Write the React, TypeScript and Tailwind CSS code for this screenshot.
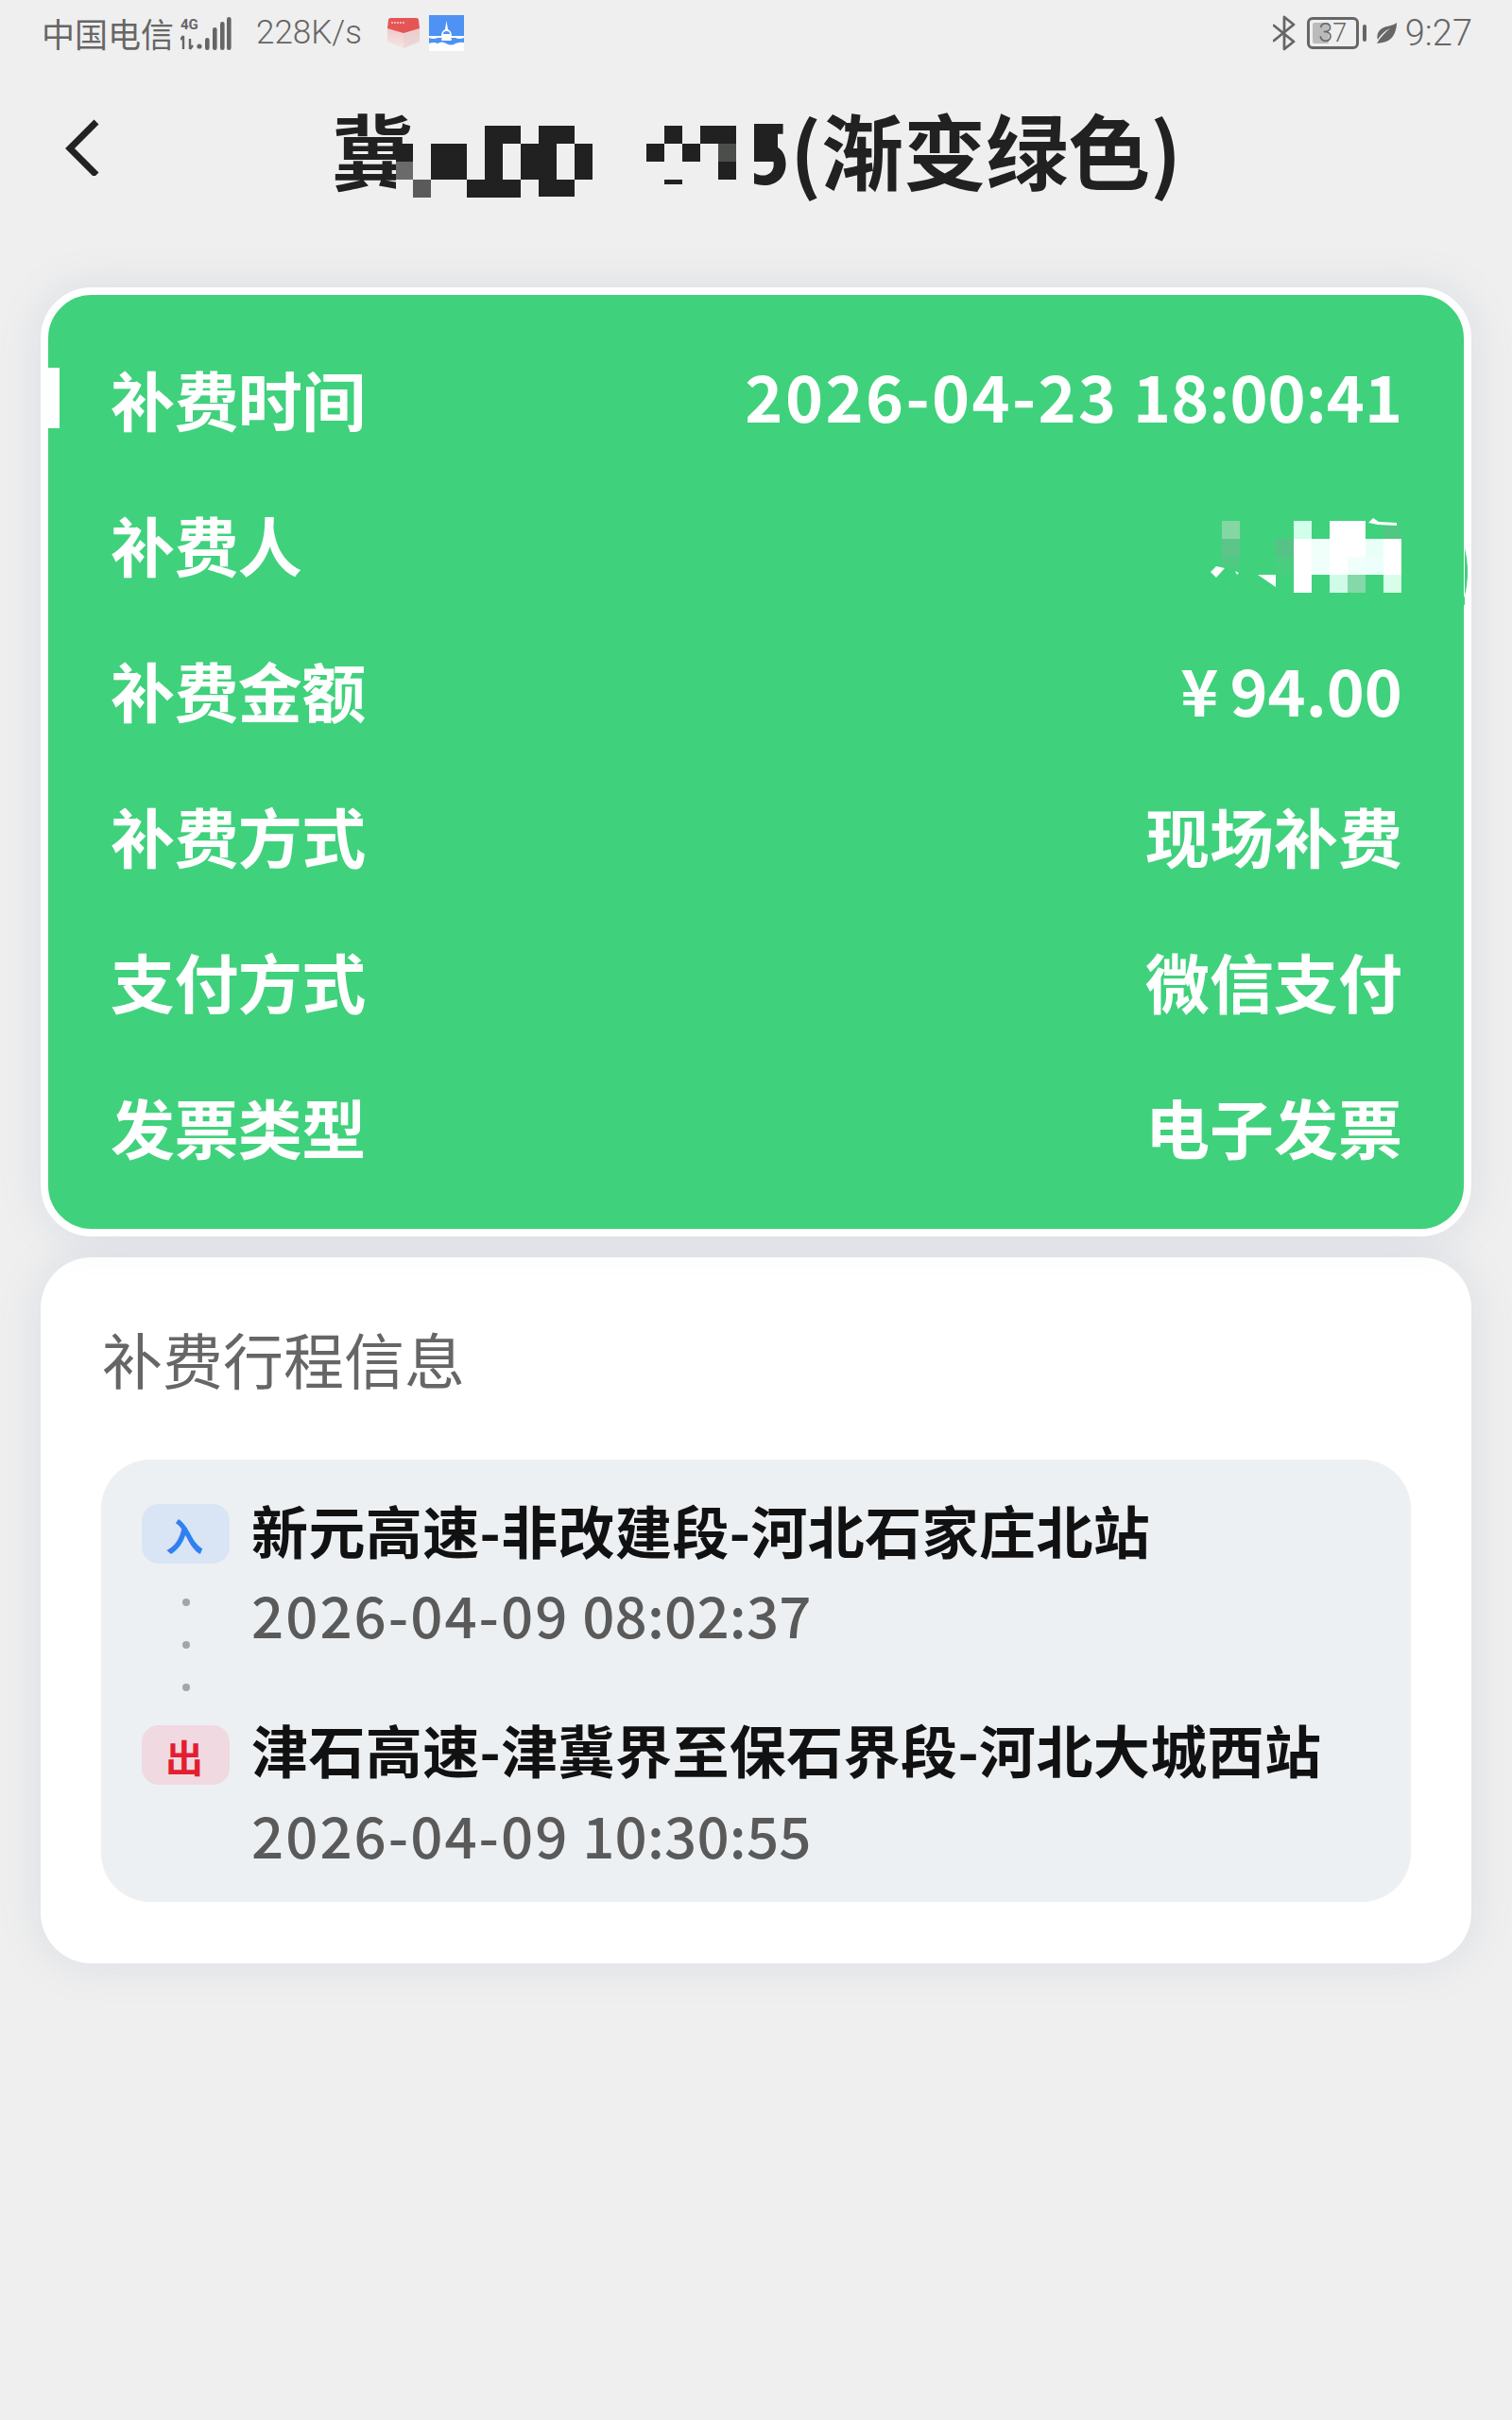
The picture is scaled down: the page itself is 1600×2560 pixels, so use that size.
import React from "react";

const CJK = "font-['Noto_Sans_CJK_SC','Noto_Sans',sans-serif]";

function SignalIcon() {
  return (
    <svg width="54" height="36" viewBox="0 0 54 36" className="ml-[7px]">
      <text x="0" y="14" fontSize="15" fontWeight="700" fill="#666" fontFamily="Roboto, sans-serif">4G</text>
      <path d="M3 21v14M0 25l3-4M10 24v11M10 35l3-4" stroke="#666" strokeWidth="2.4" fill="none" />
      <circle cx="20" cy="32" r="2.6" fill="#666" />
      <rect x="26" y="23" width="4.6" height="13" rx="2.3" fill="#666" />
      <rect x="34" y="12" width="4.6" height="24" rx="2.3" fill="#666" />
      <rect x="42" y="6" width="4.6" height="30" rx="2.3" fill="#666" />
      <rect x="49" y="1" width="4.6" height="35" rx="2.3" fill="#666" />
    </svg>
  );
}

function RedBox() {
  return (
    <svg width="36" height="34" viewBox="0 0 36 34">
      <defs>
        <linearGradient id="boxl" x1="0" y1="0" x2="0" y2="1">
          <stop offset="0" stopColor="#f0c4c4" />
          <stop offset="1" stopColor="#f5e6e6" />
        </linearGradient>
      </defs>
      <path d="M1 9 18 15 35 9V26L18 33 1 26Z" fill="url(#boxl)" />
      <path d="M18 15V33L35 26V9Z" fill="#e8cfcf" opacity="0.6" />
      <path d="M2 3Q2 1 5 1H31Q34 1 34 3L35 12 18 17 1 12Z" fill="#e45555" />
      <path d="M5 6H19" stroke="#f8d0d0" strokeWidth="1.5" strokeDasharray="2 1" />
    </svg>
  );
}

function PlaneIcon() {
  return (
    <svg width="37" height="38" viewBox="0 0 37 38">
      <rect width="37" height="38" fill="#4e93f3" />
      <path d="M18.5 6 17 15Q13 17 13 22L0 22V24Q5 26 9 24H28Q32 26 37 24V22L24 22Q24 17 20 15Z" fill="#fff" />
      <path d="M15 20Q15 17 18.5 17 22 17 22 20Z" fill="#4e93f3" />
      <path d="M0 30Q5 28 9 30 14 27 18 30 24 33 28 30 33 28 37 29V38H0Z" fill="#fff" />
      <rect x="13" y="24" width="11" height="3" rx="1.5" fill="#fff" />
    </svg>
  );
}

function StatusBar() {
  return (
    <div className="flex h-[75px] items-start justify-between pl-[44px] pr-[42px] pt-[16px] text-[#666]">
      <div className="flex items-center">
        <span className={`${CJK} text-[35px] leading-[36px]`}>中国电信</span>
        <SignalIcon />
        <span className="ml-[26px] font-['Roboto',sans-serif] text-[35px] font-light leading-[36px]">228K/s</span>
        <span className="ml-[26px] flex items-center gap-[9px]">
          <RedBox />
          <PlaneIcon />
        </span>
      </div>
      <div className="flex items-center">
        <svg width="24" height="38" viewBox="0 0 24 38" fill="none" stroke="#666" strokeWidth="2.8" strokeLinejoin="round" strokeLinecap="round">
          <path d="M1 11 22 28 12 36V2L22 10 1 27" />
        </svg>
        <div className="relative ml-[12px] flex h-[34px] w-[55px] items-center justify-center rounded-[6px] border-[3px] border-[#666]">
          <div className="absolute bottom-[3px] left-[3px] top-[3px] w-[17px] rounded-[2px] bg-[#bbbbbb]" />
          <span className="relative font-['Roboto',sans-serif] text-[27px] font-light leading-[28px]">37</span>
        </div>
        <div className="ml-[4px] h-[18px] w-[4px] rounded-full bg-[#666]" />
        <svg width="22" height="22" viewBox="0 0 22 22" className="ml-[10px]">
          <path d="M22 0C18 4 8 3 4 8 1 12 1 15 2 18 6 11 11 8 15 6 10 10 5 15 1 22 5 21 9 21 13 19 20 15 22 6 22 0Z" fill="#666" />
        </svg>
        <span className="ml-[9px] font-['Roboto',sans-serif] text-[38px] font-light leading-[36px]">9:27</span>
      </div>
    </div>
  );
}

function Header() {
  const d = "#212121";
  return (
    <div className="relative h-[229px]">
      <svg width="36" height="60" viewBox="0 0 36 60" className="absolute left-[69px] top-[51px]" fill="none" stroke="#222" strokeWidth="7">
        <path d="M33 3 5 31 33 59" />
      </svg>
      <div className={`${CJK} absolute left-[351px] top-[12px] flex items-center whitespace-nowrap text-[87px] font-bold leading-[140px] text-[#212121]`}>
        <span>冀</span>
        <span className="w-[347px]" />
        <span>5(渐变绿色)</span>
      </div>
      <svg width="440" height="110" viewBox="400 110 440 110" className="absolute left-[400px] top-[35px]">
        <path d="M419 152H440V112H798V215H419Z" fill="#efefef" />
        <path fill={d} d="M419 152h18v19h-18zM456 152h38v38h-38zM513 133h38v19h-38zM513 152h19v38h-19zM494 190h57v19h-57zM570 133h38v19h-38zM551 152h38v38h-38zM608 152h19v38h-19zM570 190h38v18h-38zM703 133h19v19h-19zM684 152h19v19h-19zM722 152h19v19h-19zM741 133h38v19h-38zM760 171h19v19h-19zM703 190h19v5h-19zM798 133h25v38h-25z" />
        <path fill="#6b6a6b" d="M419 171h18v19h-18z" />
        <path fill="#5a5a5a" d="M437 190h19v19h-19z" />
        <path fill="#4c4e4c" d="M760 152h19v19h-19z" />
      </svg>
    </div>
  );
}

function NameMosaic() {
  return (
    <svg width="356" height="160" viewBox="1200 500 356 160" className="absolute right-[-73px] top-[1px]">
      <path d="M1549 580Q1554 600 1551 620 1549 635 1543 640H1549Z" fill="#40d17c" />
      <g shapeRendering="crispEdges">
        <path fill="#84d7a3" d="M1292 551h19v19h-19z" />
        <path fill="#5ec58a" d="M1292 570h19v19h-19z" />
        <path fill="#4fca82" d="M1292 589h19v11h-19z" />
        <path fill="#56c285" d="M1349 570h19v19h-19z" />
        <path fill="#48ce7e" d="M1349 589h19v19h-19z" />
        <path fill="#50c784" d="M1463 556h19v14h-19z" />
        <path fill="#d1ffe9" d="M1368 551h19v19h-19z" />
        <path fill="#fff" d="M1406 551h38v19h-38zM1368 570h19v57h-19zM1406 570h19v38h-19zM1425 570h19v19h-19zM1463 570h19v38h-19z" />
        <path fill="#f0fffa" d="M1387 570h19v38h-19zM1425 589h19v19h-19z" />
        <path fill="#e8fff5" d="M1444 570h19v19h-19z" />
        <path fill="#ecfffc" d="M1444 589h19v19h-19z" />
        <path fill="#d1fbe9" d="M1406 608h19v19h-19z" />
        <path fill="#85d8a8" d="M1425 608h19v19h-19z" />
        <path fill="#d8fde9" d="M1463 608h19v19h-19z" />
      </g>
      <path fill="#fff" d="M1280 605 1286 599 1295 601 1286 611ZM1330 608H1349V621ZM1306 604 1310 606 1308 608ZM1447 553 1452 548 1458 552 1477 553V556L1457 555Z" />
    </svg>
  );
}

const labels = ["补费时间", "补费人", "补费金额", "补费方式", "支付方式", "发票类型"];

function Value({ i }: { i: number }) {
  if (i === 0)
    return (
      <span className="-translate-y-[4px]">
        <span className="tracking-[2.4px]">2026-04-23</span>
        <span> 18:00:41</span>
      </span>
    );
  if (i === 1) return <NameMosaic />;
  if (i === 2)
    return (
      <span className="-translate-y-[1px]">
        <span className="mr-[12px]">¥</span>
        <span>94.00</span>
      </span>
    );
  return <span>{["现场补费", "微信支付", "电子发票"][i - 3]}</span>;
}

function GreenCard() {
  return (
    <div className="relative rounded-[54px] border-[8px] border-white bg-[#40d17c] pb-[31px] pl-[66px] pr-[65px] pt-[33px] shadow-[0_0_44px_rgba(120,140,180,0.18)]">
      <div className="absolute left-0 top-[77px] h-[64px] w-[12px] bg-white" />
      {labels.map((k, i) => (
        <div key={k} className={`${CJK} relative flex h-[154px] items-center justify-between text-[68px] font-bold leading-[80px] text-white`}>
          <span className="tracking-[-0.6px]">{k}</span>
          <Value i={i} />
        </div>
      ))}
    </div>
  );
}

function Dot() {
  return <div className="h-[8px] w-[8px] rounded-full bg-[#a5a5a5]" />;
}

function Stop({ tag, tagCls, title, date, time, dots }: { tag: string; tagCls: string; title: string; date: string; time: string; dots?: boolean }) {
  return (
    <div className={`flex gap-[23px] ${dots ? "h-[234px]" : "h-[187px]"}`}>
      <div className="flex w-[93px] shrink-0 flex-col items-center">
        <div className={`${CJK} flex h-[63px] w-[93px] items-center justify-center rounded-[18px] pr-[3px] pt-[3px] text-[40px] font-bold leading-[60px] ${tagCls}`}>{tag}</div>
        {dots && (
          <div className="mt-[37px] flex flex-col gap-[37px]">
            <Dot />
            <Dot />
            <Dot />
          </div>
        )}
      </div>
      <div className={`${CJK} ${dots ? "-mt-[3px]" : "-mt-[5px]"}`}>
        <div className="whitespace-nowrap text-[60px] font-bold leading-[60px] tracking-[0.4px] text-[#111]">{title}</div>
        <div className={`${dots ? "mt-[29px]" : "mt-[30px]"} whitespace-nowrap text-[60px] font-medium leading-[60px] text-[#5a5a5a]`}>
          <span className="tracking-[2px]">{date}</span>
          <span className="tracking-[0.2px]"> {time}</span>
        </div>
      </div>
    </div>
  );
}

function TripCard() {
  return (
    <div className="mt-[22px] rounded-[54px] bg-white pb-[65px] pl-[64px] pr-[64px] pt-[64px] shadow-[0_0_44px_rgba(120,140,180,0.18)]">
      <div className={`${CJK} pl-[1px] text-[64px] leading-[84px] text-[#666]`}>补费行程信息</div>
      <div className="mt-[66px] rounded-[52px] bg-[#edf0f3] px-[43px] pt-[47px]">
        <Stop dots tag="入" tagCls="bg-[#d9e5f5] text-[#2f80f0]" title="新元高速-非改建段-河北石家庄北站" date="2026-04-09" time="08:02:37" />
        <Stop tag="出" tagCls="bg-[#f0d9e0] text-[#e31e30]" title="津石高速-津冀界至保石界段-河北大城西站" date="2026-04-09" time="10:30:55" />
      </div>
    </div>
  );
}

export default function App() {
  return (
    <div className="h-[2560px] w-[1600px] overflow-hidden bg-[#efefef]">
      <StatusBar />
      <Header />
      <div className="px-[43px]">
        <GreenCard />
        <TripCard />
      </div>
    </div>
  );
}
